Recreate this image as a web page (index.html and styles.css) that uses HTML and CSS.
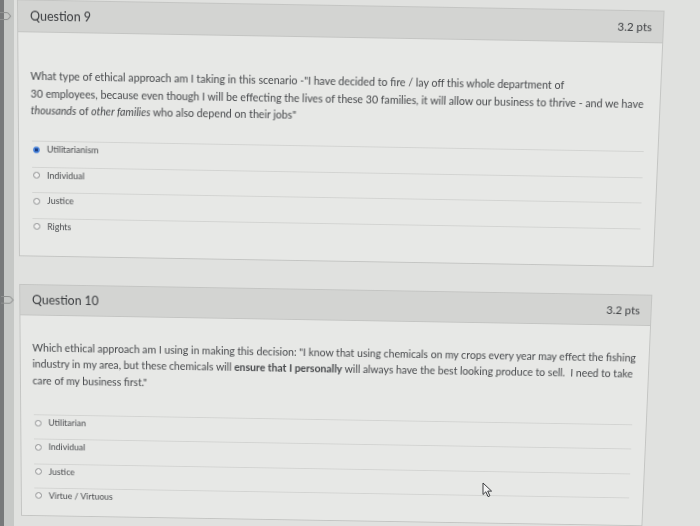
FILE: index.html
```html
<!DOCTYPE html>
<html lang="en">
<head>
<meta charset="utf-8">
<title>Quiz</title>
<link rel="stylesheet" href="styles.css">
</head>
<body>
<main class="sheet">
  <section class="question q9">
    <div class="flag-col">
      <svg class="flag" viewBox="0 0 14 10" width="14" height="10"><path d="M-1 1.5 H8.5 Q10 1.5 11 3 L12.6 5 L11 7 Q10 8.5 8.5 8.5 H-1" fill="none" stroke="#8e908f" stroke-width="1.1" stroke-linejoin="round"/></svg>
    </div>
    <div class="card">
      <header class="card-header">
        <h2 class="title">Question 9</h2>
        <span class="pts">3.2 pts</span>
      </header>
      <div class="card-body">
        <p class="prompt">What type of ethical approach am I taking in this scenario -"I have decided to fire / lay off this whole department of<br>30 employees, because even though I will be effecting the lives of these 30 families, it will allow our business to thrive - and we have<br><em>thousands</em> of <em>other families</em> who also depend on their jobs"</p>
        <ul class="answers">
          <li class="answer"><span class="radio checked"></span><span>Utilitarianism</span></li>
          <li class="answer"><span class="radio"></span><span>Individual</span></li>
          <li class="answer"><span class="radio"></span><span>Justice</span></li>
          <li class="answer"><span class="radio"></span><span>Rights</span></li>
        </ul>
      </div>
    </div>
  </section>

  <section class="question q10">
    <div class="flag-col">
      <svg class="flag" viewBox="0 0 14 10" width="14" height="10"><path d="M-1 1.5 H8.5 Q10 1.5 11 3 L12.6 5 L11 7 Q10 8.5 8.5 8.5 H-1" fill="none" stroke="#8e908f" stroke-width="1.1" stroke-linejoin="round"/></svg>
    </div>
    <div class="card">
      <header class="card-header">
        <h2 class="title">Question 10</h2>
        <span class="pts">3.2 pts</span>
      </header>
      <div class="card-body">
        <p class="prompt">Which ethical approach am I using in making this decision: "I know that using chemicals on my crops every year may effect the fishing<br>industry in my area, but these chemicals will <strong>ensure that I personally</strong> will always have the best looking produce to sell.&nbsp; I need to take<br>care of my business first."</p>
        <ul class="answers">
          <li class="answer"><span class="radio"></span><span>Utilitarian</span></li>
          <li class="answer"><span class="radio"></span><span>Individual</span></li>
          <li class="answer"><span class="radio"></span><span>Justice</span></li>
          <li class="answer"><span class="radio"></span><span>Virtue / Virtuous</span></li>
        </ul>
      </div>
    </div>
  </section>
</main>

<svg class="cursor" viewBox="0 0 12 16" width="12" height="16"><path d="M1 1 L1 12.5 L3.8 9.8 L6 14.6 L7.9 13.8 L5.7 9.1 L9.6 9.1 Z" fill="#f4f4f4" stroke="#3a3c3e" stroke-width="1" stroke-linejoin="round"/></svg>
</body>
</html>
```

FILE: styles.css
```css
html, body {
  margin: 0;
  height: 526px;
  overflow: hidden;
}

body {
  position: relative;
  background: linear-gradient(to right, #77797a 0, #77797a 4px, #c6c8c6 4px, #c6c8c6 14px, #e0e1df 14px);
  font-family: Lato, "Open Sans", sans-serif;
  color: #3e4043;
}

.sheet {
  padding-top: 5px;
  transform-origin: 340px 0;
  transform: perspective(1000px) rotateX(-4.5deg) rotate(1deg);
}

.question {
  display: flex;
  align-items: flex-start;
}

.q10 {
  margin-top: 29px;
}

.flag-col {
  width: 17px;
  flex: none;
}

.flag {
  display: block;
  margin-left: -2px;
}

.q9 .flag {
  margin-top: 12px;
}

.q10 .flag {
  margin-top: 11.5px;
}

.card {
  width: 648px;
  box-sizing: border-box;
  border: 1px solid #c4c5c3;
  background: #e7e8e6;
}

.card-header {
  height: 31px;
  display: flex;
  align-items: center;
  justify-content: space-between;
  padding: 0 11px 0 12px;
  background: #d3d4d2;
  border-bottom: 1px solid #c4c5c3;
}

.title {
  margin: 0;
  font-size: 12.5px;
  font-weight: 400;
  line-height: 16px;
  color: #3a3c3f;
}

.pts {
  font-size: 11.5px;
  line-height: 14px;
  color: #3e4043;
}

.card-body {
  padding: 0 14px 0 12px;
}

.prompt {
  margin: 0;
  font-size: 10.7px;
  line-height: 17.5px;
  white-space: nowrap;
  color: #46484b;
}

.q9 .prompt {
  margin-top: 35px;
}

.q10 .prompt {
  margin-top: 24.5px;
}

.answers {
  list-style: none;
  margin: 0 0 0 1px;
  padding: 0;
}

.q9 .answers {
  margin-top: 22.5px;
  padding-bottom: 13px;
}

.q10 .answers {
  margin-top: 28px;
  padding-bottom: 4px;
}

.answer {
  display: flex;
  align-items: flex-start;
  gap: 7px;
  height: 26.5px;
  box-sizing: border-box;
  padding-top: 3px;
  border-top: 1px solid #d3d4d2;
  font-size: 9px;
  line-height: 10px;
  color: #4a4c4f;
}

.q10 .answer {
  height: 26.3px;
}

.radio {
  flex: none;
  width: 7px;
  height: 7px;
  margin: 1.5px 0 0 1px;
  box-sizing: border-box;
  border: 1px solid #8b8d8e;
  border-radius: 50%;
  background: #f1f1f0;
}

.radio.checked {
  border-color: #3d7ad6;
  background: radial-gradient(circle, #1c3d80 0, #1c3d80 1.4px, #4a88e2 2px);
}

.cursor {
  position: absolute;
  left: 482px;
  top: 482px;
}
```
